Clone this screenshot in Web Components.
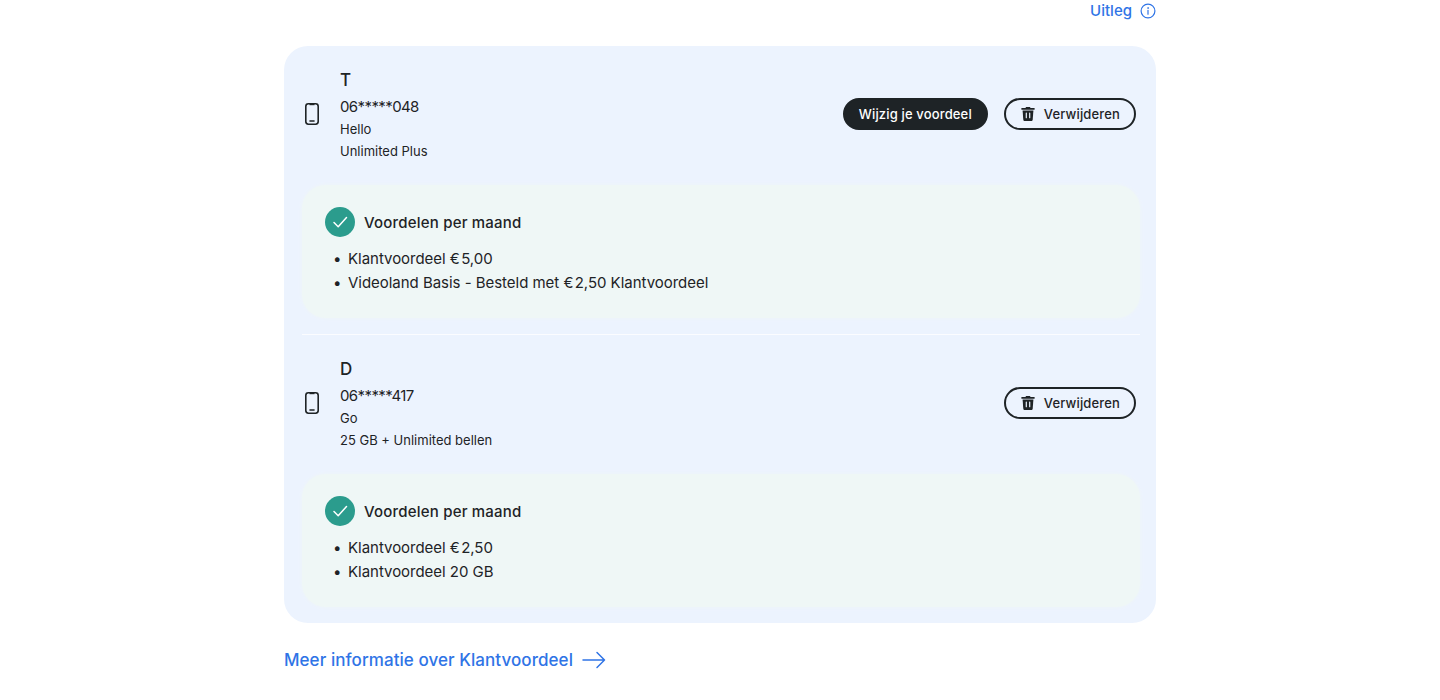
<!DOCTYPE html>
<html lang="nl">
<head>
<meta charset="utf-8">
<title>Klantvoordeel</title>
<style>
	html, body { margin: 0; background: #fff; overflow: hidden; }
	body { font-family: "Inter", "Liberation Sans", sans-serif; color: #1e2326; }
</style>
</head>
<body>
<kv-page>
	<kv-member name="T" number="06*****048" brand="Hello" plan="Unlimited Plus" editable>
		<li>Klantvoordeel €&#8202;5,00</li>
		<li>Videoland Basis - Besteld met €&#8202;2,50 Klantvoordeel</li>
	</kv-member>
	<kv-member name="D" number="06*****417" brand="Go" plan="25 GB + Unlimited bellen" divided>
		<li>Klantvoordeel €&#8202;2,50</li>
		<li>Klantvoordeel 20 GB</li>
	</kv-member>
</kv-page>
<script>
class KvPage extends HTMLElement {
	constructor() {
		super();
		this.attachShadow({ mode: 'open' }).innerHTML = `
		<style>
			:host { display: block; width: 872px; margin: 0 auto; }
			.help {
				display: flex;
				justify-content: flex-end;
				align-items: center;
				gap: 8px;
				height: 21px;
				color: #2f74e6;
				font-size: 15px;
				font-weight: 500;
			}
			.help svg { width: 16px; height: 16px; }
			.card {
				margin-top: 25px;
				padding: 20px 16px 16px 18px;
				background: #ecf3fe;
				border-radius: 24px;
			}
			.more {
				display: flex;
				align-items: center;
				gap: 9px;
				margin-top: 25px;
				color: #2f74e6;
				font-size: 17px;
				font-weight: 500;
				letter-spacing: .06px;
			}
			.more svg { width: 24px; height: 24px; }
		</style>
		<div class="help">
			<span>Uitleg</span>
			<svg viewBox="0 0 16 16" fill="none" stroke="#2f74e6" stroke-width="1.2" stroke-linecap="round">
				<circle cx="8" cy="8" r="6.9"/>
				<path d="M8 7.4v3.8"/>
				<circle cx="8" cy="5" r=".5" fill="#2f74e6" stroke-width=".6"/>
			</svg>
		</div>
		<div class="card"><slot></slot></div>
		<div class="more">
			<span>Meer informatie over Klantvoordeel</span>
			<svg viewBox="0 0 24 24" fill="none" stroke="#2f74e6" stroke-width="1.5" stroke-linecap="round" stroke-linejoin="round">
				<path d="M1 12h21.5M15 4.5l7.5 7.5-7.5 7.5"/>
			</svg>
		</div>`;
	}
}

class KvMember extends HTMLElement {
	constructor() {
		super();
		const edit = this.hasAttribute('editable') ? '<kv-button dark>Wijzig je voordeel</kv-button>' : '';
		this.attachShadow({ mode: 'open' }).innerHTML = `
		<style>
			:host { display: block; }
			:host([divided]) {
				margin-top: 16px;
				border-top: 1px solid #fbfcff;
				padding-top: 20px;
			}
			.head { display: flex; align-items: center; height: 96px; }
			.phone { width: 20px; height: 24px; margin-right: 18px; flex: none; }
			.info { flex: 1; }
			.name { font-size: 17px; font-weight: 500; line-height: 28px; }
			.number { font-size: 15px; line-height: 24px; letter-spacing: -.6px; margin: 1px 0 -1px; }
			.line { font-size: 13px; line-height: 22px; }
			.actions { display: flex; gap: 16px; margin-right: 4px; }
			.benefits {
				margin-top: 23px;
				padding: 22px 23px 23px;
				height: 88px;
				background: #eff7f6;
				border-radius: 24px;
				box-shadow: 0 0 4px 0 #eff6f7;
			}
			.title { display: flex; align-items: center; gap: 9px; font-size: 15px; font-weight: 500; letter-spacing: .2px; }
			.check { width: 30px; height: 30px; flex: none; }
			ul { margin: 10px 0 0; padding: 0 0 0 23px; list-style: none; font-size: 15px; line-height: 24px; }
			::slotted(li) { margin-left: -15px; letter-spacing: -.03px; }
			::slotted(li)::before { content: "\\2022"; display: inline-block; width: 15px; letter-spacing: 0; }
		</style>
		<div class="head">
			<svg class="phone" viewBox="0 0 20 24" fill="none" stroke="#1e2326" stroke-width="1.6">
				<rect x="3.8" y="1.8" width="12.4" height="20.4" rx="2.6"/>
				<path d="M8 19h4" stroke-linecap="round"/>
				<path d="M7.500 2.400h5"/>
			</svg>
			<div class="info">
				<div class="name">${this.getAttribute('name')}</div>
				<div class="number">${this.getAttribute('number')}</div>
				<div class="line">${this.getAttribute('brand')}</div>
				<div class="line">${this.getAttribute('plan')}</div>
			</div>
			<div class="actions">
				${edit}
				<kv-button>
					<svg slot="icon" viewBox="0 0 16 16" fill="#1e2326">
						<path d="M5.500 2 6 .9h4l.5 1.100h4.100v1.700H1.400V2z"/>
						<path d="M2.600 4.500h10.800l-.7 9.200c-.1.800-.7 1.400-1.500 1.400H4.800c-.8 0-1.400-.6-1.500-1.400z"/>
						<path d="M6.300 7v4.700M9.700 7v4.700" stroke="#ecf3fe" stroke-width="1.200" stroke-linecap="round"/>
					</svg>
					Verwijderen
				</kv-button>
			</div>
		</div>
		<div class="benefits">
			<div class="title">
				<svg class="check" viewBox="0 0 30 30">
					<circle cx="15" cy="15" r="15" fill="#2b9c8d"/>
					<path d="M9 15.500l4.200 4.200L21.500 10.500" fill="none" stroke="#fff" stroke-width="1.500" stroke-linecap="round" stroke-linejoin="round"/>
				</svg>
				<span>Voordelen per maand</span>
			</div>
			<ul><slot></slot></ul>
		</div>`;
	}
}

class KvButton extends HTMLElement {
	constructor() {
		super();
		this.attachShadow({ mode: 'open' }).innerHTML = `
		<style>
			:host { display: inline-flex; }
			.btn {
				display: flex;
				align-items: center;
				gap: 8px;
				box-sizing: border-box;
				height: 32px;
				padding: 0 14px;
				border: 2px solid #1e2326;
				border-radius: 16px;
				color: #1e2326;
				font-size: 13px;
				font-weight: 500;
				letter-spacing: .15px;
				white-space: nowrap;
			}
			:host([dark]) .btn { background: #1e2326; color: #fff; }
			::slotted(svg) { width: 16px; height: 16px; }
		</style>
		<div class="btn"><slot name="icon"></slot><slot></slot></div>`;
	}
}

customElements.define('kv-page', KvPage);
customElements.define('kv-member', KvMember);
customElements.define('kv-button', KvButton);
</script>
</body>
</html>
